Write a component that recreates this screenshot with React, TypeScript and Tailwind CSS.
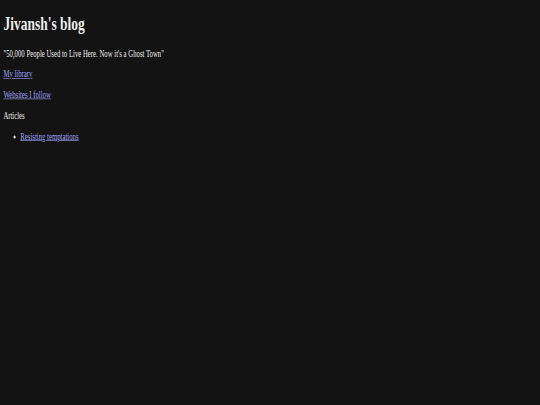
import React from 'react';

const links = [
  { label: 'My library', href: '#library' },
  { label: 'Websites I follow', href: '#follow' },
];

const articles = [{ title: 'Resisting temptations', href: '#resisting-temptations' }];

export default function App() {
  return (
    <div className="w-[540px] h-[405px] overflow-hidden bg-[#131313]">
      {/* page is laid out at full width and squeezed into the frame, as the screenshot is */}
      <div className="flow-root w-[1280px] h-[670px] origin-top-left scale-x-[0.421875] scale-y-[0.605] px-[8px] font-['Liberation_Serif',serif] text-[16px] leading-[1.15] text-[#ececec]">
        <h1 className="mt-[21.44px] mb-[21.44px] text-[32px] font-bold leading-[1.15]">Jivansh's blog</h1>
        <p className="my-4">"50,000 People Used to Live Here. Now it's a Ghost Town"</p>
        {links.map((link) => (
          <p key={link.href} className="my-4">
            <a href={link.href} className="text-[#9ea4f4] underline">
              {link.label}
            </a>
          </p>
        ))}
        <p className="my-4">Articles</p>
        <ul className="my-4 list-disc pl-[40px]">
          {articles.map((article) => (
            <li key={article.href}>
              <a href={article.href} className="text-[#9ea4f4] underline">
                {article.title}
              </a>
            </li>
          ))}
        </ul>
      </div>
    </div>
  );
}
